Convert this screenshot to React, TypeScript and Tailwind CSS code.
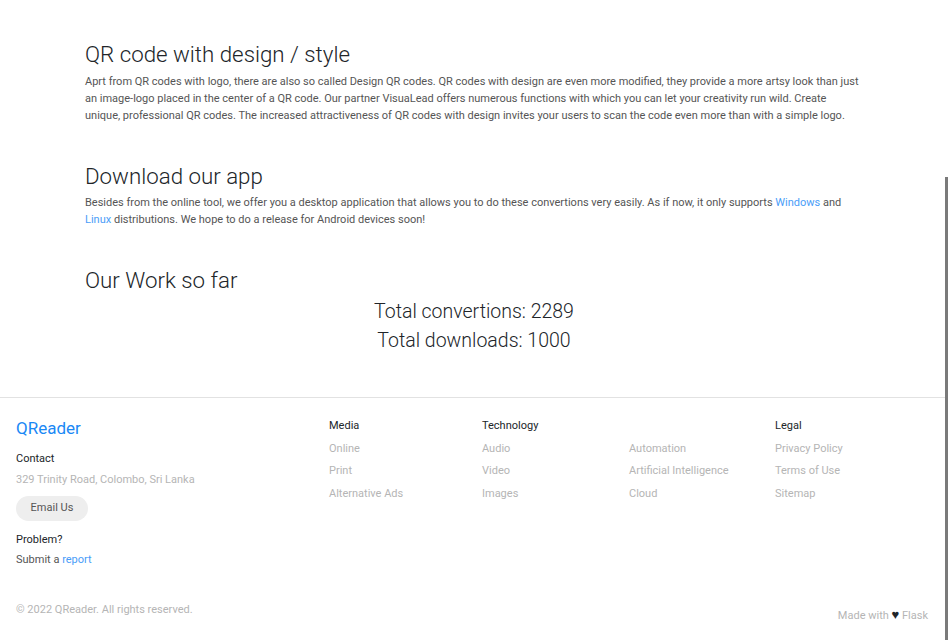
const sans = "font-['Roboto','Liberation_Sans',sans-serif]";

function Section({ title, children }: { title: string; children: React.ReactNode }) {
  return (
    <section className="mb-[38px]">
      <h2 className="text-[22.3px] font-light leading-[28px] text-[#212529]">{title}</h2>
      <div className="mt-[4.5px] text-[11px] leading-[17px] text-[#555]">{children}</div>
    </section>
  );
}

function FooterCol({ title, items }: { title?: string; items: string[] }) {
  return (
    <div className="pt-[1px]">
      <p className="h-[16px] text-[11px] leading-[16px] text-[#212529]">{title ?? ''}</p>
      <ul className="mt-[6px] space-y-[4.5px]">
        {items.map((i) => (
          <li key={i} className="text-[11px] leading-[18px] text-[#b5b5b5]">
            {i}
          </li>
        ))}
      </ul>
    </div>
  );
}

export default function App() {
  return (
    <div className={`relative min-h-[640px] bg-white ${sans}`}>
      {/* main content */}
      <main className="px-[85px] pt-[40px]">
        <Section title="QR code with design / style">
          Aprt from QR codes with logo, there are also so called Design QR codes. QR codes with design are even more
          modified, they provide a more artsy look than just an image-logo placed in the center of a QR code. Our partner
          VisuaLead offers numerous functions with which you can let your creativity run wild. Create unique,
          professional QR codes. The increased attractiveness of QR codes with design invites your users to scan the code
          even more than with a simple logo.
        </Section>

        <Section title="Download our app">
          Besides from the online tool, we offer you a desktop application that allows you to do these convertions very
          easily. As if now, it only supports <a className="text-[#4a9df8]">Windows</a> and{' '}
          <a className="text-[#4a9df8]">Linux</a> distributions. We hope to do a release for Android devices soon!
        </Section>

        <section className="pb-[42px]">
          <h2 className="text-[22.3px] font-light leading-[28px] text-[#212529]">Our Work so far</h2>
          <div className="mt-[2.5px] text-center text-[19.5px] font-light leading-[29px] text-[#212529]">
            <p>Total convertions: 2289</p>
            <p>Total downloads: 1000</p>
          </div>
        </section>
      </main>

      {/* footer */}
      <footer className="border-t border-[#e2e2e2] px-[16px] pb-[16px] pt-[19px]">
        <div className="grid grid-cols-[313px_153px_147px_146px_1fr]">
          <div>
            <p className="text-[17px] leading-[22px] text-[#1a88f5]">QReader</p>
            <p className="mt-[11px] text-[11px] leading-[18px] text-[#212529]">Contact</p>
            <p className="mt-[3px] text-[11px] leading-[18px] text-[#b5b5b5]">329 Trinity Road, Colombo, Sri Lanka</p>
            <button className="mt-[7px] h-[25px] w-[72px] rounded-full bg-[#eeeeee] text-[11px] text-[#555]">
              Email Us
            </button>
            <p className="mt-[10px] text-[11px] leading-[18px] text-[#212529]">Problem?</p>
            <p className="mt-[2px] text-[11px] leading-[18px] text-[#555]">
              Submit a <a className="text-[#4a9df8]">report</a>
            </p>
          </div>
          <FooterCol title="Media" items={['Online', 'Print', 'Alternative Ads']} />
          <FooterCol title="Technology" items={['Audio', 'Video', 'Images']} />
          <FooterCol items={['Automation', 'Artificial Intelligence', 'Cloud']} />
          <FooterCol title="Legal" items={['Privacy Policy', 'Terms of Use', 'Sitemap']} />
        </div>

        <div className="mt-[32px] flex items-start justify-between pr-[4px]">
          <p className="text-[11px] leading-[18px] text-[#b5b5b5]">© 2022 QReader. All rights reserved.</p>
          <p className="mt-[5px] text-[11px] leading-[18px] text-[#b5b5b5]">
            Made with <span className="text-[13px] text-[#212529]">♥</span> Flask
          </p>
        </div>
      </footer>

      {/* scrollbar thumb */}
      <div className="absolute right-0 top-[177px] h-[463px] w-[3px] bg-[#7a7a7a]" />
    </div>
  );
}
